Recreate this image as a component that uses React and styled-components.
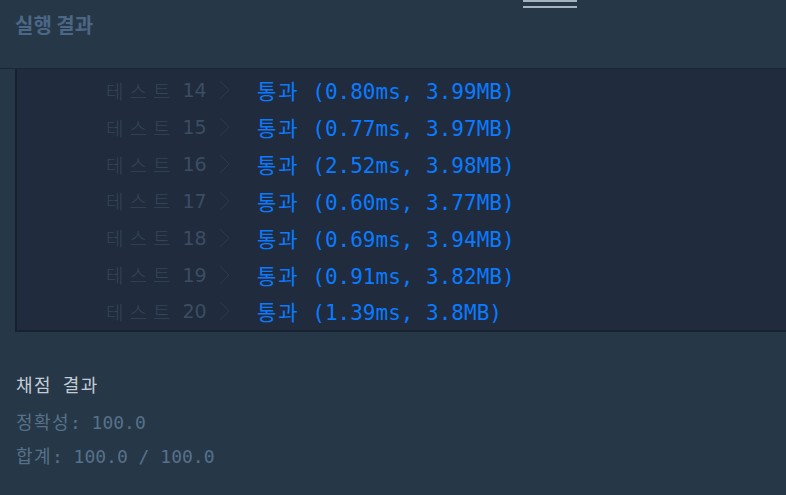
import React from "react"
import styled, { createGlobalStyle } from "styled-components"

const GlobalStyle = createGlobalStyle`
  body {
    margin: 0;
    background: #263747;
    font-family: "DejaVu Sans Mono", "Noto Sans CJK KR", monospace;
  }
`

const Page = styled.div`
  width: 786px;
  height: 495px;
  overflow: hidden;
  position: relative;
  background: #263747;
`

const Handle = styled.div`
  position: absolute;
  top: 0;
  left: 523px;
  width: 54px;
  height: 8px;
  border-top: 2px solid #a7b3be;
  border-bottom: 2px solid #a7b3be;
  box-sizing: border-box;
`

const Header = styled.div`
  height: 69px;
  box-sizing: border-box;
  padding: 15px 0 0 15px;
  border-bottom: 1px solid #1c2735;
`

const HeaderTitle = styled.h2`
  margin: 0;
  font-family: "Noto Sans CJK KR", sans-serif;
  font-size: 20px;
  line-height: 20px;
  font-weight: 700;
  color: #4c6786;
`

const Panel = styled.div`
  margin-left: 15px;
  background: #202b3d;
  border-left: 2px solid #18212e;
  border-bottom: 2px solid #18212e;
  padding: 3px 0 0;
`

const Row = styled.div`
  display: flex;
  align-items: center;
  height: 36.83px;
  padding-left: 89px;
`

const TitleCell = styled.div`
  display: flex;
  align-items: center;
  width: 151px;
  font-family: "DejaVu Sans", "Noto Sans CJK KR", sans-serif;
  font-size: 19px;
  color: #3c4d63;
`

const Hangul = styled.span`
  font-family: "Noto Sans CJK KR", sans-serif;
  font-weight: ${p => p.$weight || 400};
  letter-spacing: ${p => p.$spacing}px;
  color: ${p => p.$color || "inherit"};
`

const Num = styled.span`
  margin-left: 6px;
  width: 30px;
`

const Chevron = styled.svg`
  margin-left: 7px;
  width: 11px;
  height: 20px;
`

const Result = styled.div`
  font-size: 21px;
  color: #0a7bff;
  white-space: pre;
`

const Summary = styled.div`
  padding: 43px 0 0 16px;
`

const SummaryTitle = styled.div`
  height: 18px;
  font-size: 18px;
  line-height: 18px;
  color: #c3ccd5;
  white-space: pre;
  margin-bottom: 19px;
`

const Line = styled.div`
  height: 18px;
  font-size: 18px;
  line-height: 18px;
  color: #577189;
  white-space: pre;
  margin-bottom: 16px;
`

const tests = [
  [14, "0.80ms, 3.99MB"],
  [15, "0.77ms, 3.97MB"],
  [16, "2.52ms, 3.98MB"],
  [17, "0.60ms, 3.77MB"],
  [18, "0.69ms, 3.94MB"],
  [19, "0.91ms, 3.82MB"],
  [20, "1.39ms, 3.8MB"],
]

export default function App() {
  return (
    <Page>
      <GlobalStyle />
      <Handle />
      <Header>
        <HeaderTitle>실행 결과</HeaderTitle>
      </Header>
      <Panel>
        {tests.map(([n, r]) => (
          <Row key={n}>
            <TitleCell>
              <Hangul $spacing={6} $weight={300} $color="#34455a">테스트</Hangul>
              <Num>{n}</Num>
              <Chevron viewBox="0 0 11 20">
                <polyline points="1,1 10,10 1,19" fill="none" stroke="#2c394c" strokeWidth="1" />
              </Chevron>
            </TitleCell>
            <Result><Hangul $spacing={2}>통과</Hangul>{` (${r})`}</Result>
          </Row>
        ))}
      </Panel>
      <Summary>
        <SummaryTitle><Hangul $spacing={1.4}>채점</Hangul> <Hangul $spacing={1.4}>결과</Hangul></SummaryTitle>
        <Line><Hangul $spacing={1.4}>정확성</Hangul>: 100.0</Line>
        <Line><Hangul $spacing={1.4}>합계</Hangul>: 100.0 / 100.0</Line>
      </Summary>
    </Page>
  )
}
